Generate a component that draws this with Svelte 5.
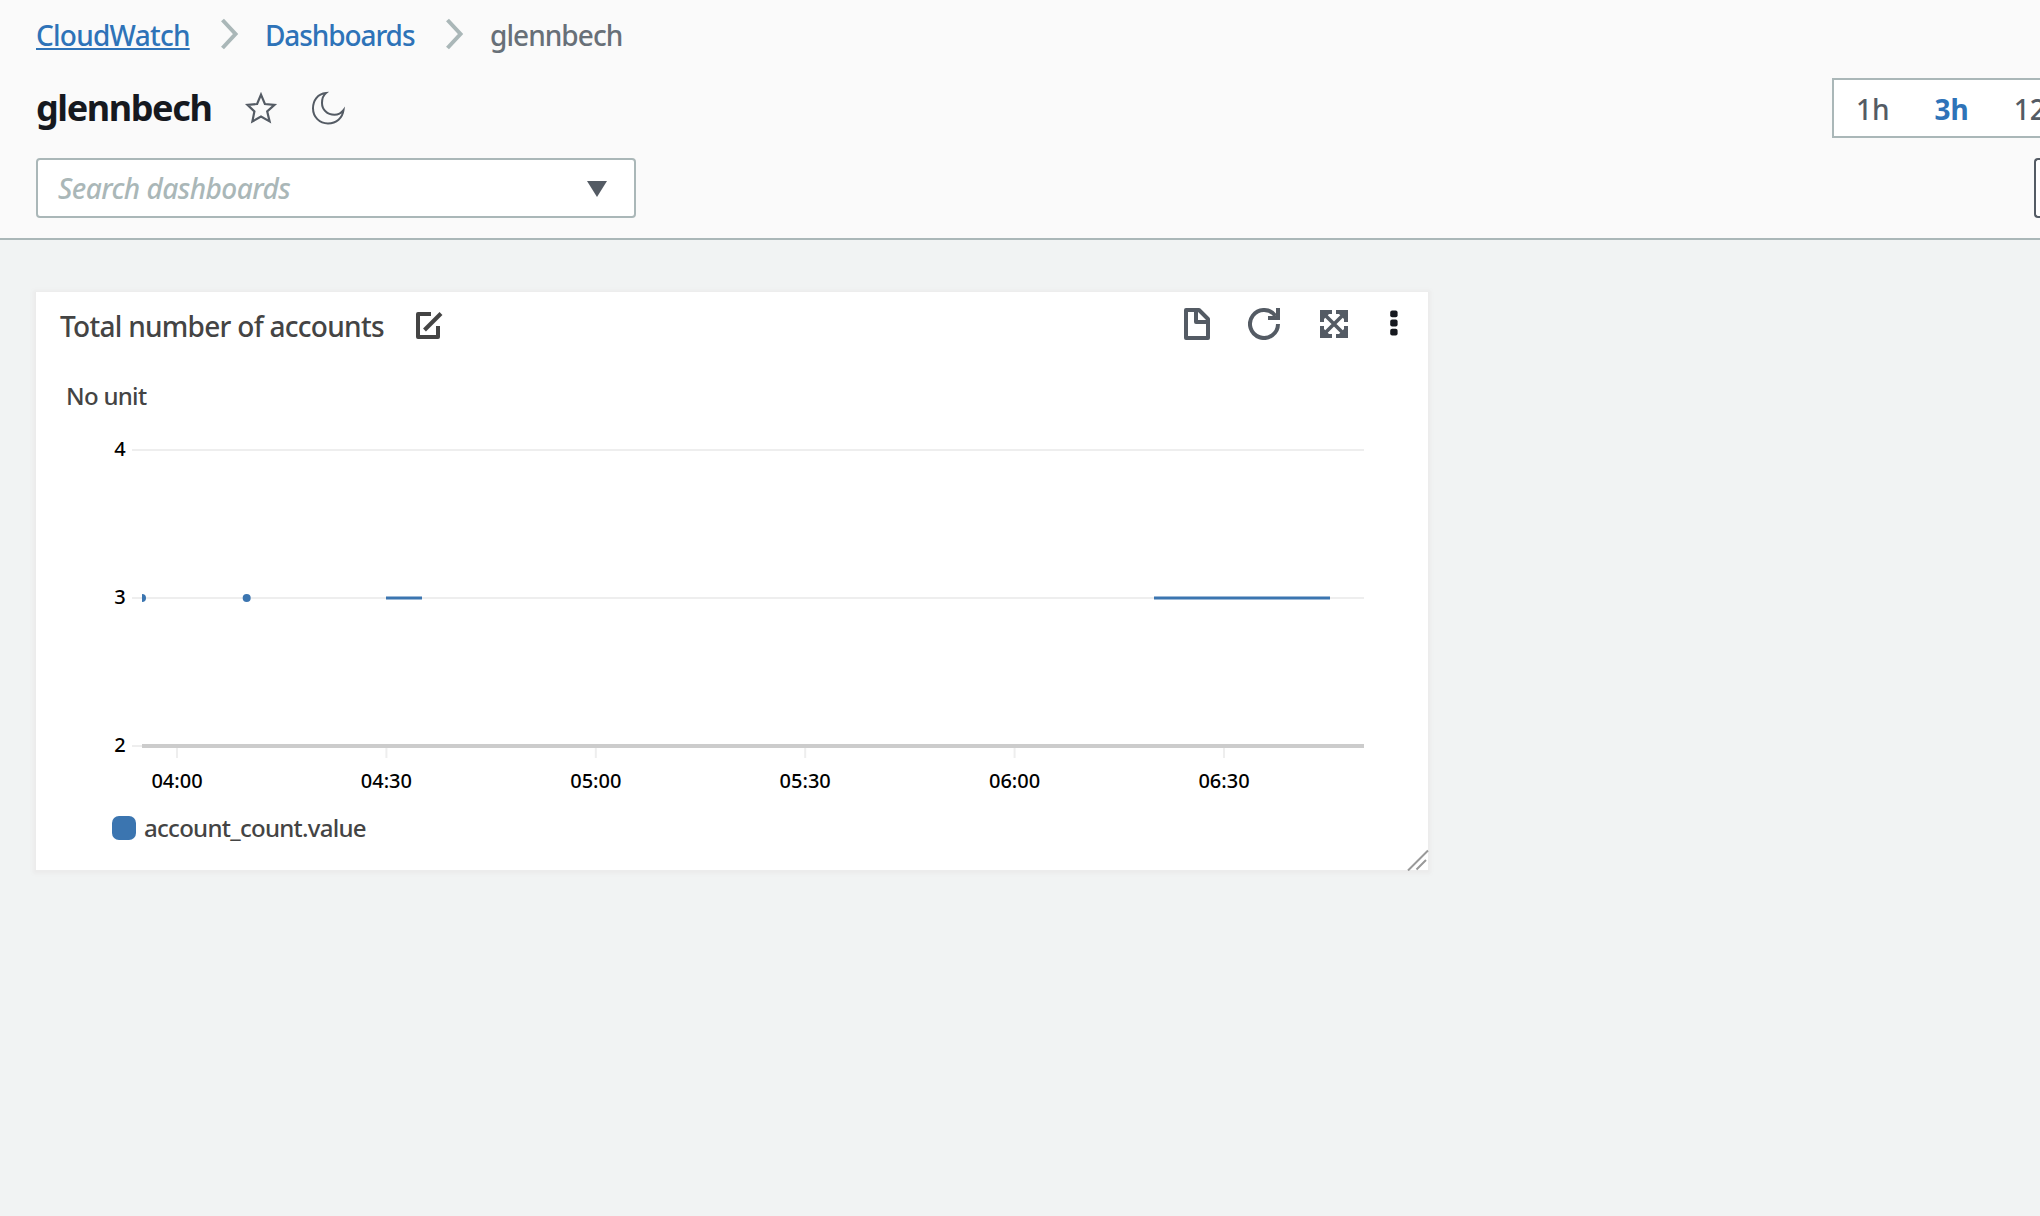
<script>
  const ranges = [
    { label: '1h', active: false },
    { label: '3h', active: true },
    { label: '12', active: false }
  ];

  // Chart geometry, in the plot's own units
  const left = 106;
  const right = 1328;
  const gridlines = [
    { value: 4, y: 36 },
    { value: 3, y: 184 },
    { value: 2, y: 332 }
  ];
  const ticks = ['04:00', '04:30', '05:00', '05:30', '06:00', '06:30'].map((label, i) => ({
    label,
    x: 141 + i * 209.4
  }));
  const segments = [
    [350, 386],
    [1118, 1294]
  ];
  const points = [106, 210.7];
</script>

<div class="page">
  <header>
    <nav>
      <a class="cloudwatch" href="#home">CloudWatch</a>
      <svg class="sep first" width="20" height="32" viewBox="0 0 20 32"><path d="M2.5 2 15.5 16 2.5 30" /></svg>
      <a class="dashboards" href="#dashboards">Dashboards</a>
      <svg class="sep second" width="20" height="32" viewBox="0 0 20 32"><path d="M2.5 2 15.5 16 2.5 30" /></svg>
      <span class="current">glennbech</span>
    </nav>

    <div class="title-row">
      <h1>glennbech</h1>
      <svg class="star" width="34" height="34" viewBox="0 0 34 34">
        <path d="M17 3.6 20.9 13 30.5 13.8 23.2 20.4 25.6 30.4 17 25.6 8.4 30.4 10.4 20.4 3.5 13.8 13.1 13Z" />
      </svg>
      <svg class="moon" width="36" height="36" viewBox="0 0 36 36">
        <path d="M16 3C7.500 3.800 3 10.500 3 18.300C3 27 9.500 33.500 18 33.500C26.500 33.500 32.500 28 33.500 20.200C31 23.500 28 24.800 24.500 24.800C17 24.800 12 19.500 12 13C12 9 13 5.500 16 3Z" />
      </svg>
      <div class="ranges">
        {#each ranges as r}
          <span class:active={r.active}>{r.label}</span>
        {/each}
      </div>
    </div>

    <div class="search-row">
      <div class="search">
        <span>Search dashboards</span>
        <svg width="20" height="16" viewBox="0 0 20 16"><path d="M0 0H20L10 16Z" fill="#545b64" /></svg>
      </div>
      <div class="action"></div>
    </div>
  </header>

  <main>
    <section class="widget">
      <div class="widget-head">
        <h2>Total number of accounts</h2>
        <svg class="edit" width="28" height="30" viewBox="0 0 28 30">
          <path d="M15 4H2V27H22V16" />
          <path d="M8.500 20 25 3.500" />
        </svg>
        <div class="tools">
          <svg class="file" width="26" height="32" viewBox="0 0 26 32">
            <path d="M2 2H15L24 11V30H2Z" />
            <path d="M12 2V14H24" />
          </svg>
          <svg class="refresh" width="32" height="32" viewBox="0 0 32 32">
            <path d="M30 16A14 14 0 1 1 27.500 8" />
            <path d="M30 0V10H20" />
          </svg>
          <svg class="expand" width="28" height="28" viewBox="0 0 28 28">
            <path class="solid" d="M0 0H12V4H9L4 9V12H0ZM16 0H28V12H24V9L19 4H16ZM0 16H4V19L9 24H12V28H0ZM28 16V28H16V24H19L24 19V16Z" />
            <path d="M3 3 25 25M25 3 3 25" />
          </svg>
          <svg class="more" width="8" height="27" viewBox="0 0 8 27">
            <rect x=".2" y=".4" width="7.400" height="6.800" rx="2" />
            <rect x=".2" y="9.600" width="7.400" height="6.800" rx="2" />
            <rect x=".2" y="18.800" width="7.400" height="6.800" rx="2" />
          </svg>
        </div>
      </div>

      <div class="unit">No unit</div>

      <svg class="chart" width="1392" height="396" viewBox="0 0 1392 396">
        <clipPath id="plot"><rect x={left} y="0" width={right - left} height="340" /></clipPath>
        {#each gridlines as g}
          <line class="grid" x1="96" x2={right} y1={g.y} y2={g.y} />
          <text x="84" y={g.y + 6}>{g.value}</text>
        {/each}
        {#each ticks as t}
          <line class="grid" x1={t.x} x2={t.x} y1="334" y2="344" />
          <text x={t.x} y="374">{t.label}</text>
        {/each}
        <line class="axis" x1={left} x2={right} y1="332" y2="332" />
        <g clip-path="url(#plot)">
          {#each points as x}
            <circle cx={x} cy="184" r="4" />
          {/each}
          {#each segments as [a, b]}
            <line class="series" x1={a} x2={b} y1="184" y2="184" />
          {/each}
        </g>
      </svg>

      <div class="legend"><i></i><span>account_count.value</span></div>

      <svg class="grip" width="22" height="22" viewBox="0 0 22 22"><path d="M1 21.500 21 1.500M9.500 20.500 19 11" /></svg>
    </section>
  </main>
</div>

<style>
  :global(body) {
    background: #f1f3f3;
  }
  .page {
    width: 100%;
    height: 1216px;
    overflow: hidden;
    background: #f1f3f3;
    font-family: 'Noto Sans', 'Open Sans', sans-serif;
    font-size: 28px;
    white-space: nowrap;
  }
  svg {
    display: block;
    flex: none;
    fill: none;
  }
  header {
    box-sizing: border-box;
    height: 240px;
    padding: 15px 0 0 36px;
    background: #fafafa;
    border-bottom: 2px solid #aab7b8;
  }
  nav {
    display: flex;
    align-items: center;
    height: 40px;
    font-weight: 500;
    line-height: 40px;
  }
  nav a {
    color: #2e73b8;
    text-decoration: none;
  }
  .cloudwatch {
    width: 154px;
    letter-spacing: -0.75px;
    text-decoration: underline;
    text-decoration-thickness: 2px;
    text-underline-offset: 2px;
    text-decoration-skip-ink: none;
  }
  .dashboards {
    width: 150px;
    letter-spacing: -1.1px;
  }
  .current {
    color: #687078;
    letter-spacing: -0.95px;
  }
  .sep {
    margin-top: -2px;
    stroke: #aab7b8;
    stroke-width: 4;
  }
  .first {
    margin-left: 30px;
    margin-right: 25px;
  }
  .second {
    margin-left: 30px;
    margin-right: 25px;
  }
  .title-row {
    display: flex;
    align-items: center;
    height: 60px;
    margin-top: 23px;
  }
  h1 {
    width: 176px;
    margin: 0;
    color: #16191f;
    font-size: 36px;
    font-weight: 700;
    line-height: 60px;
    letter-spacing: -1.4px;
  }
  .star,
  .moon {
    stroke: #545b64;
    stroke-width: 2.2;
  }
  .star {
    margin-left: 32px;
  }
  .moon {
    margin-left: 32px;
    stroke-width: 2;
  }
  .ranges {
    box-sizing: border-box;
    display: flex;
    gap: 45px;
    width: 208px;
    height: 60px;
    margin-left: auto;
    padding-left: 22px;
    overflow: hidden;
    border: 2px solid #aab7b8;
    border-right: 0;
    background: #fff;
    color: #545b64;
    font-weight: 500;
    line-height: 58px;
  }
  .ranges .active {
    color: #2e73b8;
    font-weight: 700;
  }
  .search-row {
    display: flex;
    justify-content: space-between;
    margin-top: 20px;
  }
  .search {
    box-sizing: border-box;
    display: flex;
    align-items: center;
    justify-content: space-between;
    width: 600px;
    height: 60px;
    padding: 0 27px 0 20px;
    border: 2px solid #aab7b8;
    border-radius: 4px;
    background: #fff;
    color: #aab7b8;
    font-style: italic;
    font-weight: 500;
    letter-spacing: -0.55px;
  }
  .search svg {
    margin-top: 2px;
  }
  .action {
    box-sizing: border-box;
    width: 6px;
    height: 60px;
    border: 2px solid #545b64;
    border-right: 0;
    border-radius: 4px 0 0 4px;
    background: #fff;
  }
  main {
    padding: 52px 0 0 36px;
  }
  .widget {
    position: relative;
    width: 1392px;
    height: 578px;
    background: #fff;
    box-shadow: 0 1px 3px 3px #ececec;
    color: #444;
  }
  .widget-head {
    display: flex;
    align-items: center;
    height: 66px;
    padding: 0 30px 0 24px;
  }
  h2 {
    width: 324px;
    margin: 0;
    padding-top: 2px;
    font-size: 28px;
    font-weight: 500;
    line-height: 40px;
    letter-spacing: -0.72px;
  }
  .edit {
    margin-left: 32px;
    stroke: #444;
    stroke-width: 4;
    stroke-linejoin: round;
  }
  .tools {
    display: flex;
    align-items: center;
    margin: -2px 0 0 auto;
    stroke: #545b64;
    stroke-width: 4;
  }
  .file {
    stroke-linejoin: round;
  }
  .refresh {
    margin-left: 38px;
  }
  .expand {
    margin-left: 40px;
    stroke-width: 3.6;
  }
  .solid {
    fill: #545b64;
    stroke: none;
  }
  .more {
    margin: -2px 0 0 42px;
    fill: #16191f;
    stroke: none;
  }
  .unit {
    height: 36px;
    margin-top: 20px;
    padding-left: 30px;
    font-size: 24px;
    font-weight: 500;
    line-height: 36px;
    letter-spacing: -0.7px;
  }
  .grid {
    stroke: #eee;
    stroke-width: 2;
  }
  .axis {
    stroke: #ccc;
    stroke-width: 4;
  }
  .series {
    stroke: #3b75b0;
    stroke-width: 3;
  }
  circle {
    fill: #3b75b0;
  }
  text {
    fill: #000;
    font-size: 20px;
    font-weight: 500;
    text-anchor: middle;
  }
  .legend {
    display: flex;
    align-items: center;
    gap: 8px;
    height: 36px;
    padding-left: 76px;
    font-size: 24px;
    font-weight: 500;
    line-height: 36px;
    letter-spacing: -0.72px;
  }
  .legend i {
    width: 24px;
    height: 24px;
    border-radius: 7px;
    background: #3b75b0;
  }
  .grip {
    position: absolute;
    right: -1px;
    bottom: -1px;
    stroke: #999;
    stroke-width: 2;
  }
</style>
